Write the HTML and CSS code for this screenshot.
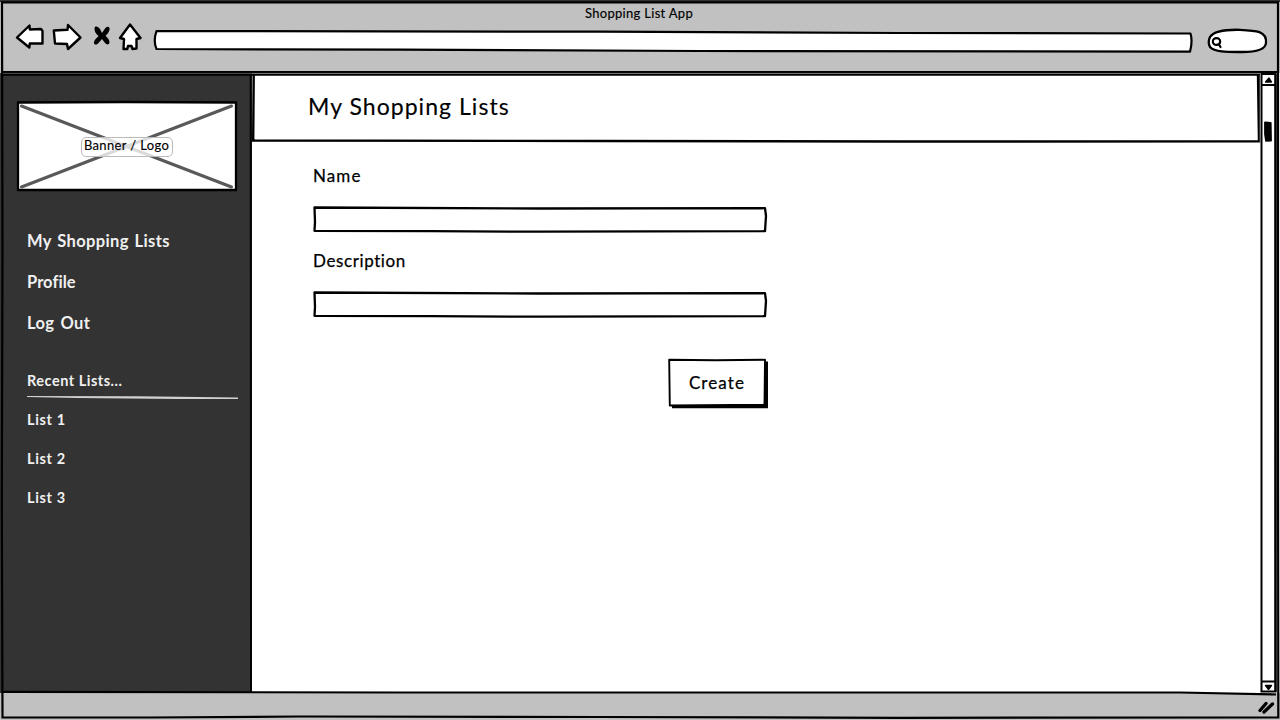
FILE: index.html
```html
<!DOCTYPE html>
<html lang="en">
<head>
<meta charset="utf-8">
<title>Shopping List App</title>
<link rel="stylesheet" href="styles.css">
</head>
<body>
<div class="window">
  <header class="chrome">
    <div class="window-title">Shopping List App</div>
    <div class="toolbar">
      <svg class="nav-icons" width="130" height="30" viewBox="14 22 130 30">
        <g fill="#fff" stroke="#000" stroke-width="2.4" stroke-linejoin="round">
          <path d="M17 37.500L29.500 25.500L29.800 29.500L41 29L42.500 31L42.500 43.500L29.800 43.500L29.300 47.500Z"/>
          <path d="M53.800 30.500L67.500 29.800L68 25L80.500 37.500L68 49L67 44L55 43.500Z"/>
          <path d="M130 24.500L120 38L124 39L123.500 49L127.300 49L128 46L131.500 46L132.500 49L136.500 48.500L136.500 39L140.500 38Z"/>
        </g>
        <path d="M94.500 28.500C94.500 25.500 98 26 100 29L102 33L105 28.500C107.500 25 110.500 27 109.500 30C108.500 33 107 34.500 105.500 35.800C108 38 109.500 40 109.500 42.500C109 45.500 106.500 44.500 105 43L102 39L98.500 43C96.500 45.500 93.500 45 94 42C94.500 39.500 97 37.500 98.700 36C96 34 94.500 31.500 94.500 28.500Z"/>
      </svg>
      <svg class="address" width="1042" height="26" viewBox="152 28 1042 26">
        <path d="M156.500 31L600 31.700L900 33L1190.500 33.500Q1192.800 41 1190 51.700L700 51L400 49.700L156.500 49Q153 41 156.500 31Z"/>
      </svg>
      <svg class="search" width="64" height="28" viewBox="1206 27 64 28">
        <path class="pill" d="M1210 37C1214 30.500 1227 29.500 1240 29.800C1256 30.500 1267 31 1266 43C1265.500 50 1255 52 1242 52C1229 52 1215 52.500 1210 47Q1207.500 42 1210 37Z"/>
        <ellipse class="lens" cx="1216.500" cy="41.500" rx="3.700" ry="3.400"/>
        <path class="lens" d="M1219 44.500L1220.500 47"/>
      </svg>
    </div>
  </header>
  <div class="content">
    <aside class="sidebar">
      <div class="banner">
        <svg class="banner-art" width="222" height="92" viewBox="16 100 222 92">
          <path d="M18 102.500L125 102L236 102.500L236 190L130 190L18 190Z" fill="#fff" stroke="#000" stroke-width="2.300"/>
          <path d="M21.500 106L231.500 187M231.500 106L21.500 187" stroke="#595959" stroke-width="3.100" stroke-linecap="round"/>
        </svg>
        <span class="banner-label"><span class="banner-text">Banner / Logo</span></span>
      </div>
      <nav class="menu">
        <a class="lists">My Shopping Lists</a>
        <a class="profile">Profile</a>
        <a class="logout">Log Out</a>
      </nav>
      <section class="recent">
        <h2>Recent Lists...</h2>
        <svg class="rule" width="212" height="4" viewBox="0 0 212 4"><path d="M0 0L112 .2L211 1.500V3H150L50 2.100L0 1Z" fill="#d0d0d0"/></svg>
        <a>List 1</a>
        <a>List 2</a>
        <a>List 3</a>
      </section>
    </aside>
    <main class="main">
      <div class="page-head"><h1>My Shopping Lists</h1></div>
      <form class="form">
        <label class="name">Name</label>
        <svg class="field" width="456" height="28" viewBox="312 205 456 28"><path d="M314.500 207.500L540 208.500L765 208.200L766 216L765 231.200L540 231.700L430 231.200L314.500 230.800L315 222L314.500 207.500Z"/></svg>
        <label class="description">Description</label>
        <svg class="field" width="456" height="28" viewBox="312 205 456 28"><path d="M314.500 207.500L540 208.500L765 208.200L766 216L765 231.200L540 231.700L430 231.200L314.500 230.800L315 222L314.500 207.500Z"/></svg>
        <div class="create">
          <svg class="create-art" width="102" height="52" viewBox="667 357 102 52">
            <path d="M672 361.500H768V408.300H672Z"/>
            <path d="M669.200 359.800L715 360.300L765 359.800L764.500 404.800L669.800 405.500Z" fill="#fff" stroke="#000" stroke-width="1.900" stroke-linejoin="round"/>
          </svg>
          <span class="create-text">Create</span>
        </div>
      </form>
    </main>
    <div class="scrollbar">
      <svg width="22" height="620" viewBox="1258 73 22 620">
        <path d="M1261.500 74H1275.500V691.500H1261.500Z" fill="#fff" stroke="#000" stroke-width="2"/>
        <path d="M1275.500 74V692" stroke="#000" stroke-width="2.200"/>
        <path d="M1261 85H1276M1261 681.500H1276" stroke="#000" stroke-width="2"/>
        <path d="M1265.500 82L1269 78L1271.500 82ZM1265.500 685.500H1271.500L1268.500 689.500Z" stroke="#000" stroke-width="1.300" stroke-linejoin="round"/>
        <path d="M1265 122.300L1270.700 122.800L1271 140.500L1266 140.800L1265 134Z" stroke="#000" stroke-width="1.800" stroke-linejoin="round"/>
      </svg>
    </div>
  </div>
  <footer class="status">
    <svg width="22" height="16" viewBox="1256 700 22 16"><path d="M1260 710.500L1266 703.500M1264 712L1272.500 704" stroke="#000" stroke-width="3.300" stroke-linecap="round"/></svg>
  </footer>
  <svg class="outline" width="1280" height="720" viewBox="0 0 1280 720">
    <g fill="none" stroke="#000" stroke-width="2.200">
      <path d="M0 1H1280" stroke="#333" stroke-width="2"/>
      <path d="M2 2.300L1278 2.300L1278 400L1278.300 717.500L900 717.800L600 717L300 716.500L150 717.500L2.500 717.300L1.800 500L2.500 250Z"/>
      <path d="M2 72H1278"/>
      <path d="M2 74.700H1260" stroke-width="1.900"/>
      <path d="M3 691.800L400 692.500L900 692.500L1180 692.500L1276 694.500"/>
      <path d="M250.700 74L251 692" stroke-width="1.900"/>
      <path d="M253.700 75L253.200 140.500L600 141L900 141.500L1259 141.300L1258 75" stroke-width="2.400"/>
      <path d="M1259.500 75V142" stroke="#333" stroke-width="1"/>
      <path d="M3 73.400H1260" stroke="#555" stroke-width=".8"/>
    </g>
  </svg>
</div>
</body>
</html>
```
FILE: styles.css
```css
* { box-sizing: border-box; }
body { margin: 0; background: #fff; color: #000; font-family: Lato, "Liberation Sans", sans-serif; font-variant-ligatures: none; }
svg { display: block; flex: none; }
.window { position: relative; width: 1280px; height: 720px; display: flex; flex-direction: column; overflow: hidden; }
.outline { position: absolute; inset: 0; pointer-events: none; }
.chrome { height: 73px; background: #c1c1c1; padding: 5px 10px 0 14px; }
.window-title { height: 17px; line-height: 17px; font-size: 13px; text-align: center; letter-spacing: .3px; padding-right: 6px; white-space: nowrap; -webkit-text-stroke: .15px #000; }
.toolbar { display: flex; align-items: flex-start; height: 35px; }
.address { margin: 6px 0 0 8px; fill: #fff; stroke: #000; stroke-width: 2.2; stroke-linejoin: round; }
.search { margin: 5px 0 0 12px; }
.pill { fill: #fff; stroke: #000; stroke-width: 2.3; }
.lens { fill: none; stroke: #000; stroke-width: 2.2; stroke-linecap: round; }
.content { height: 620px; display: flex; }
.sidebar { width: 252px; background: #333; color: #f0f0f0; padding: 27px 14px 0; border-left: 2px solid #333; }
.banner { position: relative; width: 222px; height: 92px; display: flex; align-items: center; justify-content: center; }
.banner-art { position: absolute; inset: 0; }
.banner-label { position: relative; width: 92px; height: 20px; margin-top: 1px; border: 1px solid #bbb; border-radius: 5px; background: rgba(255,255,255,.78); color: #000; display: flex; align-items: center; justify-content: center; font-size: 13px; line-height: 15px; letter-spacing: .35px; padding: 0 1px 2px 0; white-space: nowrap; -webkit-text-stroke: .15px #000; }
.menu { margin: 29px 0 0 11px; display: flex; flex-direction: column; font-size: 16.500px; font-weight: 700; }
.menu a { height: 41px; line-height: 40px; }
.lists { letter-spacing: .35px; word-spacing: 1.500px; }
.profile { letter-spacing: .05px; }
.logout { letter-spacing: .4px; word-spacing: 1.500px; }
.recent { margin: 25px 0 0 11px; display: flex; flex-direction: column; font-size: 14.500px; font-weight: 700; letter-spacing: .5px; }
.recent h2 { margin: 0; height: 27px; line-height: 24px; font-size: 14.500px; font-weight: 700; }
.recent a { height: 39px; line-height: 39px; letter-spacing: .65px; }
.main { width: 1006px; }
.page-head { height: 69px; padding: 17px 0 0 56px; }
h1 { margin: 0; font-size: 23px; line-height: 32px; font-weight: 400; letter-spacing: 1.050px; -webkit-text-stroke: .15px #000; }
.form { width: 516px; padding: 22px 0 0 60px; display: flex; flex-direction: column; font-size: 17px; -webkit-text-stroke: .25px #000; }
.form label { height: 24px; line-height: 24px; margin-left: 1px; }
.name { letter-spacing: 1.100px; }
.description { letter-spacing: .6px; }
.field { margin: 17px 0 16px; fill: #fff; stroke: #000; stroke-width: 2.3; stroke-linejoin: round; }
.create { position: relative; width: 102px; height: 52px; margin: 23px 0 0 355px; padding: 0 2px 1px 0; display: flex; align-items: center; justify-content: center; letter-spacing: 1.100px; }
.create-art { position: absolute; inset: 0; }
.create-text { position: relative; }
.scrollbar { width: 22px; }
.status { height: 27px; background: #c1c1c1; padding: 7px 2px 0; display: flex; justify-content: flex-end; }
```
